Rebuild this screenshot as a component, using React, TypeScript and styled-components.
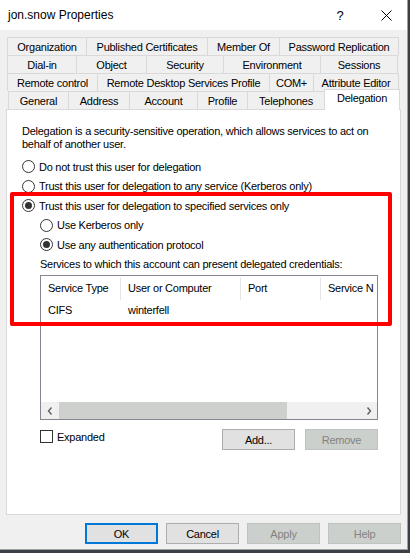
import React from "react";
import styled, { createGlobalStyle } from "styled-components";

const GlobalStyle = createGlobalStyle`
  html, body { margin: 0; padding: 0; }
  body { background: #3b4046; width: 410px; height: 553px; overflow: hidden; }
  * { box-sizing: border-box; }
`;

const Window = styled.div`
  position: relative;
  width: 408px;
  height: 550px;
  background: #f0f0f0;
  border-right: 1px solid #a0a0a0;
  border-bottom: 1px solid #a0a0a0;
  font-family: "Liberation Sans", Arial, sans-serif;
  font-size: 11px;
  letter-spacing: -0.25px;
  color: #000;
  display: flex;
  flex-direction: column;
`;

const TitleBar = styled.div`
  height: 30px;
  background: #fff;
  display: flex;
  align-items: center;
  padding-left: 8px;
  font-size: 12px;
  letter-spacing: 0;
`;

const TitleText = styled.div`
  flex: 1;
`;

const TitleButton = styled.div<{ $w: number }>`
  width: ${(p) => p.$w}px;
  height: 30px;
  display: flex;
  align-items: center;
  justify-content: center;
  font-size: 13px;
`;

const Tabs = styled.div`
  margin-top: 7px;
  display: flex;
  flex-direction: column;
`;

const TabRow = styled.div<{ $inset: number }>`
  display: flex;
  height: 18px;
  padding-left: ${(p) => p.$inset}px;
`;

const Tab = styled.div<{ $w: number; $active?: boolean }>`
  width: ${(p) => p.$w}px;
  margin-right: -1px;
  height: ${(p) => (p.$active ? "21px" : "18px")};
  margin-top: ${(p) => (p.$active ? "-2px" : "0")};
  border: 1px solid #d9d9d9;
  border-bottom: none;
  background: ${(p) => (p.$active ? "#fff" : "#f0f0f0")};
  display: flex;
  align-items: center;
  justify-content: center;
  padding-bottom: ${(p) => (p.$active ? "4px" : "0")};
  position: relative;
  z-index: ${(p) => (p.$active ? 2 : 1)};
  white-space: nowrap;
`;

const Pane = styled.div`
  margin-left: 6px;
  width: 395px;
  height: 406px;
  background: #fff;
  border: 1px solid #d9d9d9;
  display: flex;
  flex-direction: column;
  padding: 15px 0 0 15px;
`;

const Description = styled.div`
  line-height: 13px;
  width: 360px;
`;

const RadioList = styled.div`
  margin-top: 6px;
  display: flex;
  flex-direction: column;
`;

const OptionRow = styled.label<{ $indent?: boolean }>`
  display: flex;
  align-items: center;
  height: 19.5px;
  padding-left: ${(p) => (p.$indent ? "18px" : "0")};
  gap: 4px;
  white-space: nowrap;
`;

const RadioCircle = styled.span<{ $checked?: boolean }>`
  width: 13px;
  height: 13px;
  border-radius: 50%;
  border: 1px solid #333;
  background: #fff;
  display: flex;
  align-items: center;
  justify-content: center;
  &::after {
    content: "";
    width: 7px;
    height: 7px;
    border-radius: 50%;
    background: ${(p) => (p.$checked ? "#333" : "transparent")};
  }
`;

const SubSection = styled.div`
  padding-left: 18px;
`;

const ServicesLabel = styled.div`
  height: 19.5px;
  display: flex;
  align-items: center;
`;

const ListBox = styled.div`
  margin-top: 1px;
  width: 338px;
  height: 145px;
  border: 1px solid #828790;
  display: flex;
  flex-direction: column;
  background: #fff;
`;

const ListBody = styled.div`
  flex: 1;
  overflow: hidden;
`;

const HeaderRow = styled.div`
  display: flex;
  height: 24px;
  white-space: nowrap;
`;

const HeaderCell = styled.div<{ $w: number }>`
  flex: 0 0 ${(p) => p.$w}px;
  display: flex;
  align-items: center;
  padding-left: 7px;
  position: relative;
  &::after {
    content: "";
    position: absolute;
    right: 0;
    top: 2px;
    bottom: 0;
    width: 1px;
    background: #e5e5e5;
  }
`;

const DataRow = styled.div`
  display: flex;
  height: 19px;
  white-space: nowrap;
`;

const DataCell = styled.div<{ $w: number }>`
  flex: 0 0 ${(p) => p.$w}px;
  display: flex;
  align-items: center;
  padding-left: 7px;
`;

const HScroll = styled.div`
  height: 17px;
  display: flex;
  background: #f0f0f0;
`;

const ScrollArrow = styled.div`
  width: 17px;
  display: flex;
  align-items: center;
  justify-content: center;
`;

const ScrollTrack = styled.div`
  flex: 1;
  display: flex;
  align-items: stretch;
  padding: 0 0 0 1px;
`;

const ScrollThumb = styled.div<{ $w: number }>`
  width: ${(p) => p.$w}px;
  background: #cdd0cd;
`;

const ActionRow = styled.div`
  margin-top: 9px;
  width: 338px;
  display: flex;
  align-items: flex-start;
`;

const CheckRow = styled.label`
  flex: 1;
  display: flex;
  align-items: center;
  gap: 4px;
  margin-top: 1px;
  height: 13px;
`;

const CheckBox = styled.span`
  width: 13px;
  height: 13px;
  border: 1px solid #333;
  background: #fff;
`;

const Button = styled.button<{ $disabled?: boolean; $default?: boolean }>`
  width: 73px;
  height: 21px;
  font-family: "Liberation Sans", Arial, sans-serif;
  font-size: 11px;
  letter-spacing: -0.25px;
  padding: 0;
  background: ${(p) => (p.$disabled ? "#ccd0cc" : "#e1e1e1")};
  color: ${(p) => (p.$disabled ? "#838383" : "#000")};
  border: ${(p) =>
    p.$default ? "2px solid #0078d7" : p.$disabled ? "1px solid #bfc3bf" : "1px solid #adadad"};
`;

const PaneButtons = styled.div`
  display: flex;
  gap: 10px;
`;

const Footer = styled.div`
  margin-top: 8px;
  display: flex;
  justify-content: flex-end;
  gap: 8px;
  padding-right: 6px;
`;

const RedFrame = styled.div`
  position: absolute;
  left: 10px;
  top: 192px;
  width: 382px;
  height: 134px;
  border: 4px solid #ff0000;
  border-radius: 2px;
  pointer-events: none;
  z-index: 5;
`;

const tabRows: { label: string; w: number; active?: boolean }[][] = [
  [
    { label: "Organization", w: 80 },
    { label: "Published Certificates", w: 122 },
    { label: "Member Of", w: 73 },
    { label: "Password Replication", w: 120 },
  ],
  [
    { label: "Dial-in", w: 70 },
    { label: "Object", w: 71 },
    { label: "Security", w: 78 },
    { label: "Environment", w: 98 },
    { label: "Sessions", w: 78 },
  ],
  [
    { label: "Remote control", w: 91 },
    { label: "Remote Desktop Services Profile", w: 173 },
    { label: "COM+", w: 45 },
    { label: "Attribute Editor", w: 86 },
  ],
  [
    { label: "General", w: 61 },
    { label: "Address", w: 62 },
    { label: "Account", w: 69 },
    { label: "Profile", w: 51 },
    { label: "Telephones", w: 78 },
    { label: "Delegation", w: 76, active: true },
  ],
];

const Chevron = ({ dir }: { dir: "left" | "right" }) => (
  <svg width="6" height="8" viewBox="0 0 6 8">
    <path
      d={dir === "left" ? "M4.5 0.5 L1.5 4 L4.5 7.5" : "M1.5 0.5 L4.5 4 L1.5 7.5"}
      fill="none"
      stroke="#606060"
      strokeWidth="1.4"
    />
  </svg>
);

const cols = [80, 120, 80, 80];

export default function App() {
  return (
    <>
      <GlobalStyle />
      <Window>
        <TitleBar>
          <TitleText>jon.snow Properties</TitleText>
          <TitleButton $w={50}>?</TitleButton>
          <TitleButton $w={42}>
            <svg width="11" height="11" viewBox="0 0 11 11">
              <path d="M0.5 0.5 L10.5 10.5 M10.5 0.5 L0.5 10.5" stroke="#000" strokeWidth="1" />
            </svg>
          </TitleButton>
        </TitleBar>
        <Tabs>
          {tabRows.map((row, i) => (
            <TabRow key={i} $inset={i === 3 ? 8 : 7}>
              {row.map((t) => (
                <Tab key={t.label} $w={t.w} $active={t.active}>
                  {t.label}
                </Tab>
              ))}
            </TabRow>
          ))}
        </Tabs>
        <Pane>
          <Description>
            Delegation is a security-sensitive operation, which allows services to act on behalf of
            another user.
          </Description>
          <RadioList>
            <OptionRow>
              <RadioCircle />
              Do not trust this user for delegation
            </OptionRow>
            <OptionRow>
              <RadioCircle />
              Trust this user for delegation to any service (Kerberos only)
            </OptionRow>
            <OptionRow>
              <RadioCircle $checked />
              Trust this user for delegation to specified services only
            </OptionRow>
            <OptionRow $indent>
              <RadioCircle />
              Use Kerberos only
            </OptionRow>
            <OptionRow $indent>
              <RadioCircle $checked />
              Use any authentication protocol
            </OptionRow>
          </RadioList>
          <SubSection>
            <ServicesLabel>Services to which this account can present delegated credentials:</ServicesLabel>
            <ListBox>
              <ListBody>
                <HeaderRow>
                  <HeaderCell $w={cols[0]}>Service Type</HeaderCell>
                  <HeaderCell $w={cols[1]}>User or Computer</HeaderCell>
                  <HeaderCell $w={cols[2]}>Port</HeaderCell>
                  <HeaderCell $w={cols[3]}>Service N</HeaderCell>
                </HeaderRow>
                <DataRow>
                  <DataCell $w={cols[0]}>CIFS</DataCell>
                  <DataCell $w={cols[1]}>winterfell</DataCell>
                </DataRow>
              </ListBody>
              <HScroll>
                <ScrollArrow>
                  <Chevron dir="left" />
                </ScrollArrow>
                <ScrollTrack>
                  <ScrollThumb $w={228} />
                </ScrollTrack>
                <ScrollArrow>
                  <Chevron dir="right" />
                </ScrollArrow>
              </HScroll>
            </ListBox>
            <ActionRow>
              <CheckRow>
                <CheckBox />
                Expanded
              </CheckRow>
              <PaneButtons>
                <Button>Add...</Button>
                <Button $disabled>Remove</Button>
              </PaneButtons>
            </ActionRow>
          </SubSection>
        </Pane>
        <Footer>
          <Button $default>OK</Button>
          <Button>Cancel</Button>
          <Button $disabled>Apply</Button>
          <Button $disabled>Help</Button>
        </Footer>
        <RedFrame />
      </Window>
    </>
  );
}
